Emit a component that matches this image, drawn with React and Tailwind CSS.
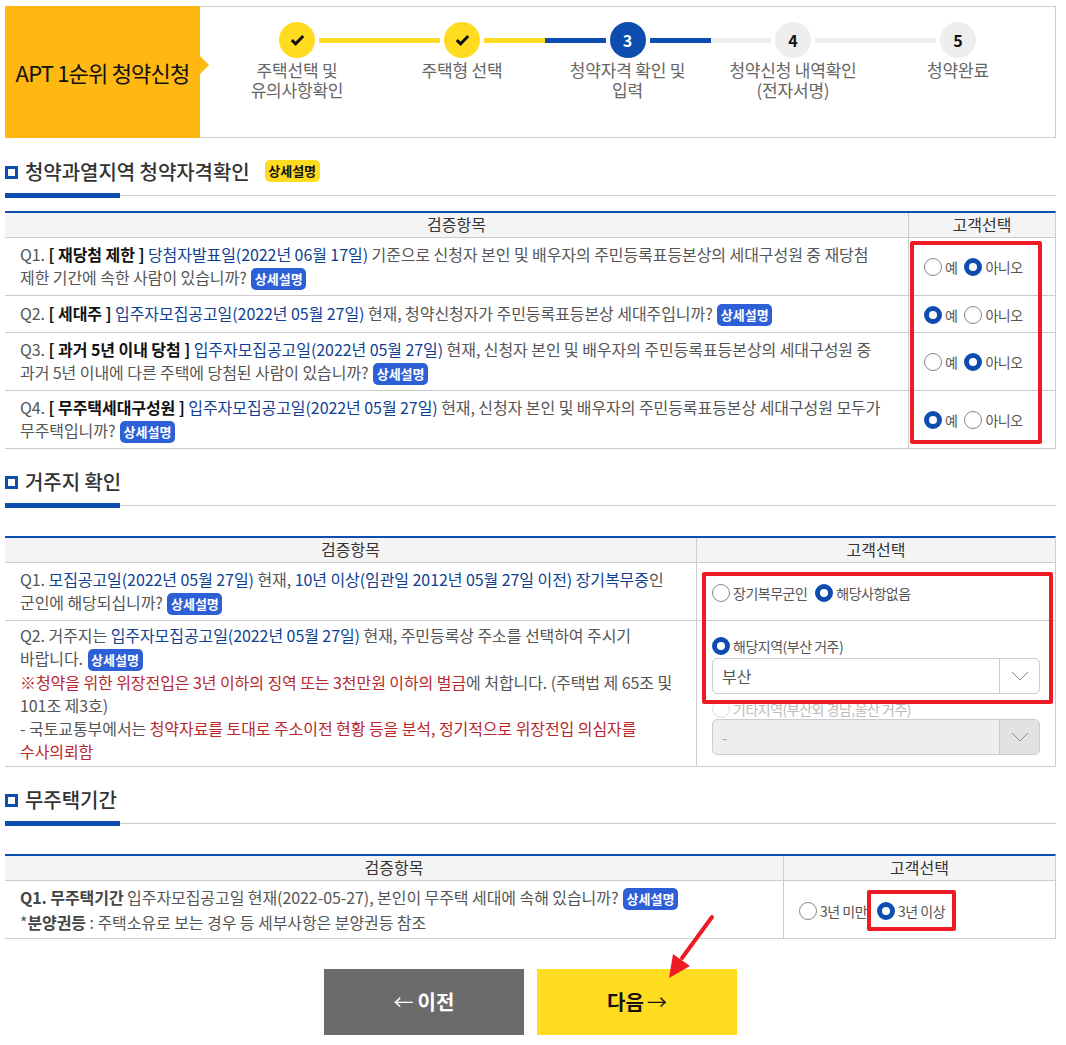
import React from "react";

const FONT = '"Noto Sans CJK KR", "Noto Sans KR", sans-serif';

function Radio({ on, label, dim, className = "" }) {
  return (
    <span className={"inline-flex items-center whitespace-nowrap text-[14px] tracking-[-0.5px] leading-[20px] " + (dim ? "text-[#bbb] " : "text-[#555] ") + className}>
      <span
        className={
          "w-[18px] h-[18px] rounded-full mr-[3px] shrink-0 bg-white " +
          (on ? "border-[5px] border-[#0d4db0]" : dim ? "border border-[#ddd]" : "border border-[#888]")
        }
      />
      {label}
    </span>
  );
}

function Badge({ yellow }) {
  return (
    <span
      className={
        "inline-block align-middle w-[55px] h-[22px] rounded-[5px] text-center text-[13px] font-bold leading-[22px] tracking-normal whitespace-nowrap mx-[1px] -mt-[2px] " +
        (yellow ? "bg-[#ffdc20] text-[#111]" : "bg-[#2d5fd6] text-white")
      }
    >
      상세설명
    </span>
  );
}

function Heading({ title, badge, first }) {
  return (
    <div className={"flex flex-col justify-end " + (first ? "h-[60px]" : "h-[59px]")}>
      <div className="flex items-center h-[28px] mb-[7px]">
        <span className="w-[13px] h-[13px] border-[3px] border-[#0d4db0] bg-white mr-[7px]" />
        <span className="text-[20px] font-medium text-[#333] leading-[28px] tracking-[-0.05px]">{title}</span>
        {badge && <span className="ml-[14px] flex"><Badge yellow /></span>}
      </div>
      <div className="flex items-center h-[5px]">
        <div className="w-[115px] h-[5px] bg-[#0d4db0]" />
        <div className="flex-1 h-px bg-[#ccc]" />
      </div>
    </div>
  );
}

function Head({ left }) {
  return (
    <div className="flex h-[27px] bg-[#f4f4f4] border-t-2 border-[#0d4db0] border-b border-b-[#ccc] border-r border-r-[#ccc] text-[16px] text-[#333] leading-[23px]">
      <div className="text-center border-r border-[#ccc]" style={{ width: left }}>검증항목</div>
      <div className="flex-1 text-center">고객선택</div>
    </div>
  );
}

function Row({ left, h, children, right, rightClass = "" }) {
  return (
    <div className="flex border-b border-[#ccc] border-r border-r-[#ccc]" style={{ height: h }}>
      <div className="flex items-center pl-[15px] border-r border-[#ccc] text-[16px] leading-[23px] tracking-[-0.07px] text-[#555] whitespace-nowrap" style={{ width: left }}>
        <div>{children}</div>
      </div>
      <div className={"flex-1 " + rightClass}>{right}</div>
    </div>
  );
}

const B = ({ children }) => <b className="font-bold text-[#111]">{children}</b>;
const Bl = ({ children }) => <span className="text-[#0f3f92]">{children}</span>;
const R = ({ children }) => <span className="text-[#b9262e]">{children}</span>;

function Step({ n, label, state, leftC, rightC, wide }) {
  const circle =
    state === "done" ? "bg-[#ffdc20] text-[#111]" : state === "now" ? "bg-[#0d4db0] text-white" : "bg-[#eee] text-[#111]";
  return (
    <div className={(wide ? "w-[166px]" : "w-[165px]") + " flex flex-col items-center"}>
      <div className="flex items-center w-full h-[36px]">
        <div className={"flex-1 h-[5px] mr-[4px] " + leftC} />
        <div className={"w-[36px] h-[36px] rounded-full flex items-center justify-center text-[16px] font-bold " + circle}>
          {state === "done" ? (
            <svg width="15" height="12" viewBox="0 0 15 12" fill="none">
              <path d="M1.8 6.2 5.6 9.8 13.2 2" stroke="#111" strokeWidth="3" />
            </svg>
          ) : (
            n
          )}
        </div>
        <div className={"flex-1 h-[5px] ml-[4px] " + rightC} />
      </div>
      <div className="mt-[2px] text-center text-[17px] leading-[20px] tracking-[-0.2px] text-[#666] whitespace-nowrap">{label}</div>
    </div>
  );
}

function Chevron({ color }) {
  return (
    <svg width="18" height="10" viewBox="0 0 18 10" fill="none">
      <path d="M1 1 9 9 17 1" stroke={color} strokeWidth="1" />
    </svg>
  );
}

function Select({ value, disabled }) {
  return (
    <div className={"flex h-[36px] w-[328px] rounded-[5px] border border-[#ccc] overflow-hidden " + (disabled ? "bg-[#eee] text-[#aaa]" : "bg-white text-[#555]")}>
      <div className="flex-1 pl-[9px] text-[16px] leading-[34px]">{value}</div>
      <div className={"w-[40px] flex items-center justify-center border-l border-[#ccc] " + (disabled ? "bg-[#e2e2e2]" : "")}>
        <Chevron color="#888" />
      </div>
    </div>
  );
}

const yn = "flex items-center pl-[15px] gap-[7px] pt-[1px]";

export default function App() {
  return (
    <div className="relative w-[1066px] h-[1045px] overflow-hidden bg-white pt-[6px] pl-[5px] pr-[10px]" style={{ fontFamily: FONT }}>
      {/* top steps */}
      <div className="flex h-[132px] border border-[#ccc] border-l-0">
        <div className="relative w-[195px] bg-[#ffb812] flex items-center justify-center text-[22px] tracking-[-0.8px] text-[#111] -mt-px -mb-px whitespace-nowrap">
          APT 1순위 청약신청
          <span className="absolute left-full top-[50px] w-0 h-0 border-y-[9px] border-y-transparent border-l-[9px] border-l-[#ffb812]" />
        </div>
        <div className="flex pl-[14.5px] pt-[15px]">
          <Step n={1} state="done" label={<>주택선택 및<br />유의사항확인</>} leftC="" rightC="bg-[#ffdc20]" />
          <Step n={2} state="done" label="주택형 선택" leftC="bg-[#ffdc20]" rightC="bg-[#ffdc20]" />
          <Step n={3} wide state="now" label={<>청약자격 확인 및<br />입력</>} leftC="bg-[#0d4db0]" rightC="bg-[#0d4db0]" />
          <Step n={4} state="todo" label={<>청약신청 내역확인<br />(전자서명)</>} leftC="bg-[#eee]" rightC="bg-[#eee]" />
          <Step n={5} state="todo" label="청약완료" leftC="bg-[#eee]" rightC="" />
        </div>
      </div>

      <Heading first title="청약과열지역 청약자격확인" badge />
      <div className="h-[13px]" />
      <Head left={904} />
      <Row left={904} h={58} rightClass={yn}
        right={<><Radio label="예" /><Radio on label="아니오" /></>}>
        Q1. <B>[ 재당첨 제한 ]</B> <Bl>당첨자발표일(2022년 06월 17일)</Bl> 기준으로 신청자 본인 및 배우자의 주민등록표등본상의 세대구성원 중 재당첨<br />
        제한 기간에 속한 사람이 있습니까? <Badge />
      </Row>
      <Row left={904} h={37} rightClass={yn}
        right={<><Radio on label="예" /><Radio label="아니오" /></>}>
        Q2. <B>[ 세대주 ]</B> <Bl>입주자모집공고일(2022년 05월 27일)</Bl> 현재, 청약신청자가 주민등록표등본상 세대주입니까? <Badge />
      </Row>
      <Row left={904} h={58} rightClass={yn}
        right={<><Radio label="예" /><Radio on label="아니오" /></>}>
        Q3. <B>[ 과거 5년 이내 당첨 ]</B> <Bl>입주자모집공고일(2022년 05월 27일)</Bl> 현재, 신청자 본인 및 배우자의 주민등록표등본상의 세대구성원 중<br />
        과거 5년 이내에 다른 주택에 당첨된 사람이 있습니까? <Badge />
      </Row>
      <Row left={904} h={58} rightClass={yn}
        right={<><Radio on label="예" /><Radio label="아니오" /></>}>
        Q4. <B>[ 무주택세대구성원 ]</B> <Bl>입주자모집공고일(2022년 05월 27일)</Bl> 현재, 신청자 본인 및 배우자의 주민등록표등본상 세대구성원 모두가<br />
        무주택입니까? <Badge />
      </Row>

      <Heading title="거주지 확인" />
      <div className="h-[28px]" />
      <Head left={692} />
      <Row left={692} h={58} rightClass="flex items-start pl-[15px] pt-[20px] gap-[8px]"
        right={<><Radio label="장기복무군인" /><Radio on label="해당사항없음" /></>}>
        Q1. <Bl>모집공고일(2022년 05월 27일)</Bl> 현재, <Bl>10년 이상(임관일 2012년 05월 27일 이전) 장기복무중</Bl>인<br />
        군인에 해당되십니까? <Badge />
      </Row>
      <Row left={692} h={146} rightClass="flex flex-col items-start pl-[15px] pt-[15px]"
        right={
          <>
            <Radio on label="해당지역(부산 거주)" className="h-[20px]" />
            <div className="mt-[2px]"><Select value="부산" /></div>
            <Radio dim label="기타지역(부산외 경남,울산 거주)" className="h-[20px] mt-[5px]" />
            <Select value="-" disabled />
          </>
        }>
        Q2. 거주지는 <Bl>입주자모집공고일(2022년 05월 27일)</Bl> 현재, 주민등록상 주소를 선택하여 주시기<br />
        바랍니다. <Badge /><br />
        <R>※청약을 위한 위장전입은 3년 이하의 징역 또는 3천만원 이하의 벌금</R>에 처합니다. (주택법 제 65조 및<br />
        101조 제3호)<br />
        - 국토교통부에서는 <R>청약자료를 토대로 주소이전 현황 등을 분석, 정기적으로 위장전입 의심자를</R><br />
        <R>수사의뢰함</R>
      </Row>

      <Heading title="무주택기간" />
      <div className="h-[28px]" />
      <Head left={779} />
      <Row left={779} h={58} rightClass="flex items-center pl-[15px] pt-[3px] gap-[10px]"
        right={<><Radio label="3년 미만" /><Radio on label="3년 이상" /></>}>
        <div className="leading-[24px]">
          <span className="font-bold text-[#444]">Q1. 무주택기간</span> 입주자모집공고일 현재(2022-05-27), 본인이 무주택 세대에 속해 있습니까? <Badge /><br />
          *<span className="font-bold text-[#444]">분양권등</span> : 주택소유로 보는 경우 등 세부사항은 분양권등 참조
        </div>
      </Row>

      <div className="flex gap-[13px] mt-[30px] ml-[319px]">
        <div className="w-[200px] h-[66px] bg-[#6b6b6b] text-white flex items-center justify-center text-[20px] font-bold shrink-0">
          <span className="font-normal mr-[4px]">←</span>이전
        </div>
        <div className="w-[200px] h-[66px] bg-[#ffdc20] text-[#111] flex items-center justify-center text-[20px] font-bold shrink-0">
          다음<span className="font-normal ml-[3px]">→</span>
        </div>
      </div>

      {/* annotations */}
      <div className="absolute left-[910px] top-[241px] w-[132px] h-[203px] border-[4px] border-[#ed1c24] rounded-[2px]" />
      <div className="absolute left-[702px] top-[572px] w-[351px] h-[132px] border-[4px] border-[#ed1c24] rounded-[2px]" />
      <div className="absolute left-[867px] top-[890px] w-[89px] h-[41px] border-[4px] border-[#ed1c24] rounded-[2px]" />
      <svg className="absolute left-[660px] top-[910px]" width="60" height="72" viewBox="0 0 60 72" fill="none">
        <path d="M52 7 22 48" stroke="#ed1c24" strokeWidth="4" strokeLinecap="round" />
        <polygon points="9,68 13,44 30,56" fill="#ed1c24" />
      </svg>
    </div>
  );
}
